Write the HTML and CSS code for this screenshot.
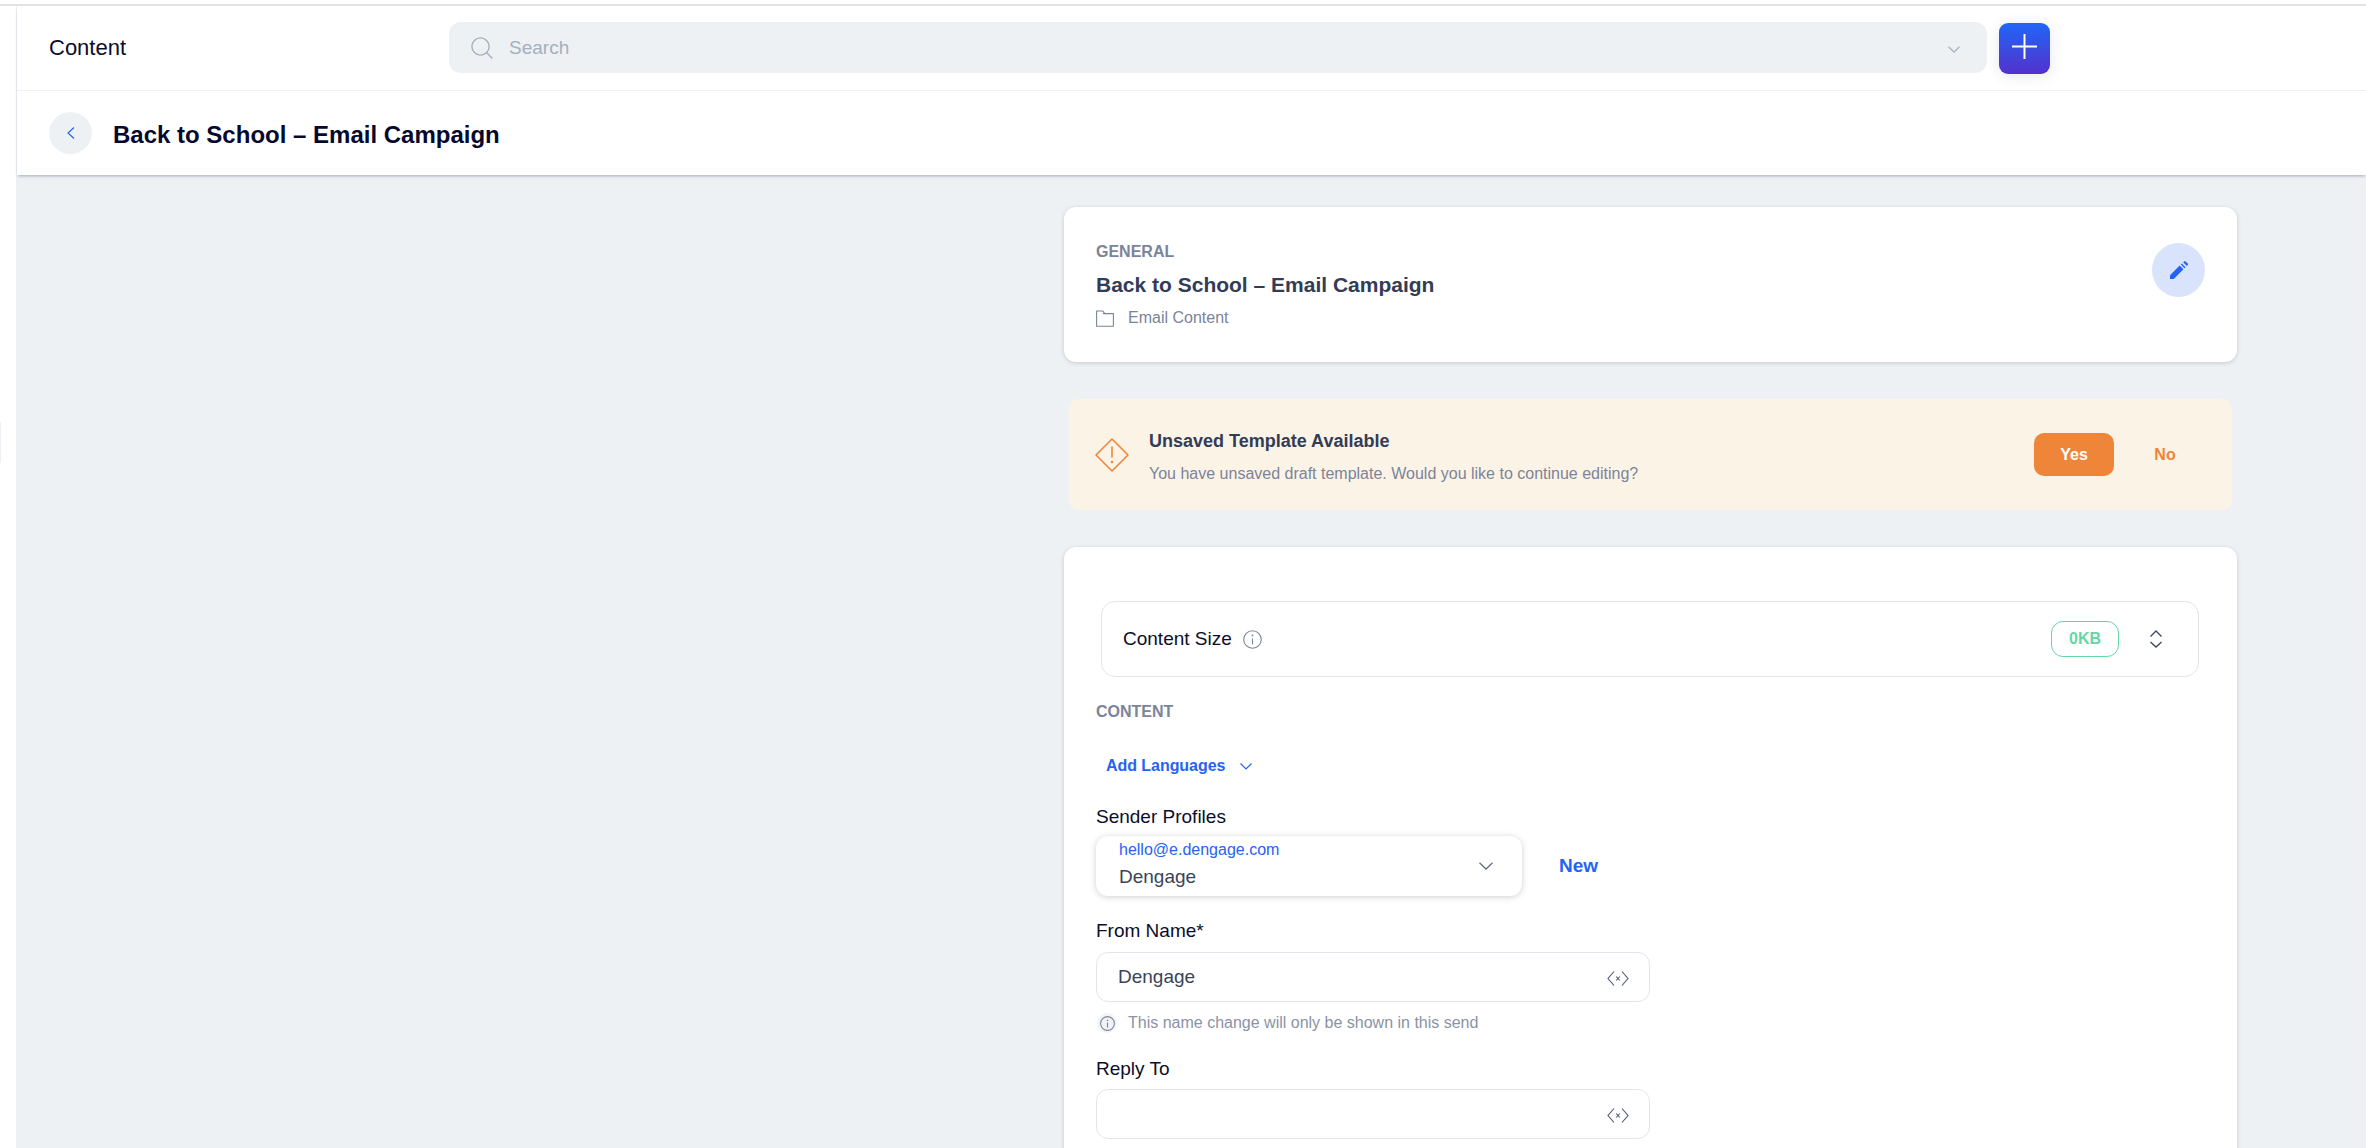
FILE: index.html
```html
<!DOCTYPE html>
<html lang="en">
<head>
    <meta charset="UTF-8">
    <title>Content</title>
    <link rel="stylesheet" href="styles.css">
</head>
<body>
    <div class="top-line"></div>
    <div class="shell">
        <div class="sidebar"><div class="sidebar-handle"></div></div>
        <div class="page">
            <div class="header">
                <div class="header-top">
                    <div class="section-name">Content</div>
                    <div class="search">
                        <svg class="search-icon" viewBox="0 0 22 22" fill="none" stroke="#a4afbd" stroke-width="1.4"><circle cx="9.5" cy="9.5" r="8.6"/><path d="M15.8 15.8l5.6 5.6"/></svg>
                        <span class="search-text">Search</span>
                        <svg class="search-chevron" viewBox="0 0 12 7" fill="none" stroke="#a9b3c1" stroke-width="1.3"><path d="M.5.7L6 6l5.5-5.3"/></svg>
                    </div>
                    <button class="add-btn">
                        <svg viewBox="0 0 25 25" width="25" height="25" stroke="#fff" stroke-width="2"><path d="M12.5 0v25M0 12.5h25"/></svg>
                    </button>
                </div>
                <div class="header-bottom">
                    <button class="back-btn">
                        <svg viewBox="0 0 8 12" width="8" height="12" fill="none" stroke="#2563f5" stroke-width="1.2"><path d="M7 .5L1 6l6 5.5"/></svg>
                    </button>
                    <h1 class="page-title">Back to School – Email Campaign</h1>
                </div>
            </div>

            <div class="main">
                <div class="column">
                    <div class="card general-card">
                        <div class="general-info">
                            <div class="section-label">GENERAL</div>
                            <div class="general-name">Back to School – Email Campaign</div>
                            <div class="general-folder">
                                <svg viewBox="0 0 18 17" width="18" height="17" fill="none" stroke="#7b8499" stroke-width="1.1"><path d="M.6 16.2V1h6.2l2 2.6h8.6v12.6z"/><path d="M6.8 3.6h2"/></svg>
                                <span>Email Content</span>
                            </div>
                        </div>
                        <button class="edit-btn">
                            <svg viewBox="0 0 18 18" width="18" height="18" fill="#2563f5"><path d="M0 14.2V18h3.8L13.4 8.3 9.7 4.6z"/><path d="M10.8 3.5l3.7 3.7 1-1-3.7-3.7z"/><path d="M13.2 1.3l3.6 3.6.9-.9a1 1 0 0 0 0-1.4L15.5.4a1 1 0 0 0-1.4 0z"/></svg>
                        </button>
                    </div>

                    <div class="alert">
                        <svg class="alert-icon" viewBox="0 0 34 34" fill="none" stroke="#ef8539" stroke-width="1.6"><path d="M17 1l16 16-16 16L1 17z" stroke-linejoin="round"/><path d="M17 8.5v11"/><circle cx="17" cy="24" r="1.3" fill="#ef8539" stroke="none"/></svg>
                        <div class="alert-text">
                            <div class="alert-title">Unsaved Template Available</div>
                            <div class="alert-sub">You have unsaved draft template. Would you like to continue editing?</div>
                        </div>
                        <button class="yes-btn">Yes</button>
                        <button class="no-btn">No</button>
                    </div>

                    <div class="card content-card">
                        <div class="size-box">
                            <span class="size-label">Content Size</span>
                            <svg class="info-icon" viewBox="0 0 19 19" fill="none" stroke="#7b8499" stroke-width="1.1"><circle cx="9.5" cy="9.5" r="8.8"/><path d="M9.5 8.4v6"/><circle cx="9.5" cy="5.4" r=".9" fill="#7b8499" stroke="none"/></svg>
                            <span class="size-badge">0KB</span>
                            <svg class="size-toggle" viewBox="0 0 12 18" width="12" height="18" fill="none" stroke="#3f4a63" stroke-width="1.4"><path d="M.5 6.5L6 1l5.5 5.5M.5 12L6 17l5.5-5"/></svg>
                        </div>

                        <div class="section-label content-label">CONTENT</div>

                        <div class="add-lang">
                            <span>Add Languages</span>
                            <svg viewBox="0 0 12 7" width="12" height="7" fill="none" stroke="#2563f5" stroke-width="1.2"><path d="M.5.5L6 6l5.5-5.5"/></svg>
                        </div>

                        <div class="field-label sender-label">Sender Profiles</div>
                        <div class="sender-row">
                            <div class="sender-select">
                                <div>
                                    <div class="sender-mail">hello@e.dengage.com</div>
                                    <div class="sender-name">Dengage</div>
                                </div>
                                <svg viewBox="0 0 14 8" width="14" height="8" fill="none" stroke="#666e7c" stroke-width="1.3"><path d="M.5.7L7 7l6.5-6.3"/></svg>
                            </div>
                            <span class="new-link">New</span>
                        </div>

                        <div class="field-label from-label">From Name*</div>
                        <div class="text-field">
                            <span>Dengage</span>
                            <svg class="var-icon" viewBox="0 0 22 15" fill="none" stroke="#4a5570" stroke-width="1.1"><path d="M7 .5L1 7.5l6 7M15 .5l6 7-6 7"/><path d="M9.2 5.5l3.6 4M12.8 5.5l-3.6 4"/></svg>
                        </div>
                        <div class="field-hint">
                            <span class="hint-icon">
                                <svg viewBox="0 0 15 15" width="15" height="15" fill="none" stroke="#7b8499" stroke-width="1.1"><circle cx="7.5" cy="7.5" r="6.9"/><path d="M7.5 6.5v5"/><circle cx="7.5" cy="4.2" r=".8" fill="#7b8499" stroke="none"/></svg>
                            </span>
                            <span>This name change will only be shown in this send</span>
                        </div>

                        <div class="field-label reply-label">Reply To</div>
                        <div class="text-field reply-field">
                            <svg class="var-icon" viewBox="0 0 22 15" fill="none" stroke="#4a5570" stroke-width="1.1"><path d="M7 .5L1 7.5l6 7M15 .5l6 7-6 7"/><path d="M9.2 5.5l3.6 4M12.8 5.5l-3.6 4"/></svg>
                        </div>
                    </div>
                </div>
            </div>
        </div>
    </div>
</body>
</html>
```

FILE: styles.css
```css
* {
    box-sizing: border-box;
}

html, body {
    margin: 0;
    height: 100%;
    overflow: hidden;
}

body {
    font-family: "Liberation Sans", Arial, sans-serif;
    background: #fff;
    color: #0b0d2a;
}

button {
    border: none;
    padding: 0;
    font-family: inherit;
    cursor: pointer;
}

.top-line {
    height: 6px;
    border-bottom: 2px solid #e2e3e5;
}

.shell {
    display: flex;
    height: 1142px;
}

.sidebar {
    width: 17px;
    flex-shrink: 0;
    border-right: 1px solid #eef1f4;
    padding-top: 416px;
}

.sidebar-handle {
    width: 1px;
    height: 41px;
    background: #edf1f6;
}

.page {
    flex: 1;
    display: flex;
    flex-direction: column;
    min-width: 0;
}

/* header */
.header {
    background: #fff;
    box-shadow: 0 2px 3px -1px rgba(30,40,60,0.35);
    position: relative;
}

.header-top {
    height: 85px;
    border-bottom: 1px solid #f0f1f3;
    display: flex;
    align-items: center;
    padding-left: 32px;
}

.section-name {
    width: 400px;
    font-size: 22px;
}

.search {
    width: 1538px;
    height: 51px;
    margin-top: -1px;
    background: #eef1f4;
    border-radius: 12px;
    display: flex;
    align-items: center;
    padding: 0 27px 0 22px;
}

.search-icon {
    width: 22px;
    height: 22px;
}

.search-text {
    margin-left: 16px;
    font-size: 19px;
    color: #a4afbd;
}

.search-chevron {
    width: 12px;
    height: 7px;
    margin-left: auto;
    margin-top: 3px;
}

.add-btn {
    width: 51px;
    height: 51px;
    margin-left: 12px;
    margin-top: 1px;
    border-radius: 9px;
    background: linear-gradient(#2166f6, #5331cd);
    box-shadow: 0 2px 14px rgba(40,60,120,0.12);
    display: flex;
    align-items: center;
    justify-content: center;
    padding-bottom: 5px;
}

.header-bottom {
    height: 84px;
    display: flex;
    align-items: center;
    padding-left: 32px;
}

.back-btn {
    width: 43px;
    height: 42px;
    border-radius: 50%;
    background: #eef1f4;
    display: flex;
    align-items: center;
    justify-content: center;
}

.page-title {
    margin: 3px 0 0 21px;
    font-size: 24px;
    font-weight: bold;
    color: #07082e;
}

/* main column */
.main {
    flex: 1;
    background: #eef1f4;
    padding: 32px 0 0 1047px;
    overflow: hidden;
}

.column {
    width: 1173px;
}

.card {
    background: #fff;
    border-radius: 12px;
    box-shadow: 0 1px 4px rgba(30,40,60,0.2);
}

.section-label {
    font-size: 16px;
    line-height: 20px;
    font-weight: bold;
    color: #7b8499;
}

.general-card {
    height: 155px;
    display: flex;
    justify-content: space-between;
    align-items: flex-start;
    padding: 35px 32px 0;
}

.general-name {
    margin-top: 10px;
    font-size: 21px;
    line-height: 26px;
    font-weight: bold;
    color: #323c57;
}

.general-folder {
    margin-top: 10px;
    display: flex;
    align-items: center;
    gap: 14px;
    font-size: 16px;
    line-height: 20px;
    color: #7b8499;
}

.edit-btn {
    width: 53px;
    height: 54px;
    margin-top: 1px;
    border-radius: 50%;
    background: #d9e3fb;
    display: flex;
    align-items: center;
    justify-content: center;
}

/* alert */
.alert {
    height: 111px;
    margin: 37px 5px;
    padding: 0 27px 0 26px;
    background: #fcf3e7;
    border-radius: 10px;
    display: flex;
    align-items: center;
}

.alert-icon {
    width: 34px;
    height: 34px;
    flex-shrink: 0;
}

.alert-text {
    margin-left: 20px;
    padding-top: 5px;
    flex: 1;
}

.alert-title {
    font-size: 18px;
    line-height: 24px;
    font-weight: bold;
    color: #323c57;
}

.alert-sub {
    margin-top: 10px;
    font-size: 16px;
    line-height: 22px;
    color: #7b8499;
}

.yes-btn {
    width: 80px;
    height: 43px;
    padding-top: 1px;
    border-radius: 10px;
    background: #ef8539;
    color: #fff;
    font-size: 16px;
    font-weight: bold;
}

.no-btn {
    width: 80px;
    height: 43px;
    padding-top: 1px;
    margin-left: 11px;
    background: none;
    color: #ef8539;
    font-size: 16px;
    font-weight: bold;
}

/* content card */
.content-card {
    padding: 54px 32px 40px;
}

.size-box {
    height: 76px;
    margin: 0 6px 0 5px;
    padding: 0 30px 0 21px;
    border: 1px solid #e1e6ed;
    border-radius: 14px;
    display: flex;
    align-items: center;
}

.size-label {
    font-size: 19px;
}

.info-icon {
    width: 19px;
    height: 19px;
    margin-left: 11px;
}

.size-badge {
    width: 68px;
    height: 36px;
    margin-left: auto;
    border: 1px solid #64d6a8;
    border-radius: 12px;
    color: #64d6a8;
    font-size: 16px;
    font-weight: bold;
    display: flex;
    align-items: center;
    justify-content: center;
}

.size-toggle {
    margin-left: 31px;
    margin-right: 6px;
}

.content-label {
    margin-top: 25px;
}

.add-lang {
    margin: 34px 0 0 10px;
    height: 20px;
    display: flex;
    align-items: center;
    gap: 15px;
    font-size: 16px;
    font-weight: bold;
    letter-spacing: -0.05px;
    color: #2563f5;
}

.field-label {
    font-size: 19px;
    line-height: 22px;
}

.sender-label {
    margin-top: 30px;
}

.sender-row {
    margin-top: 8px;
    display: flex;
    align-items: center;
}

.sender-select {
    width: 426px;
    height: 60px;
    padding: 0 29px 0 23px;
    border-radius: 12px;
    box-shadow: 0 1px 6px rgba(30,40,60,0.22);
    display: flex;
    align-items: center;
    justify-content: space-between;
}

.sender-mail {
    font-size: 16px;
    line-height: 20px;
    color: #2563f5;
    margin-top: -4px;
}

.sender-name {
    font-size: 19px;
    line-height: 24px;
    margin-top: 5px;
    color: #3a4459;
}

.new-link {
    margin-left: 37px;
    font-size: 19px;
    font-weight: bold;
    color: #2563f5;
}

.from-label {
    margin-top: 24px;
}

.text-field {
    width: 554px;
    height: 50px;
    margin-top: 10px;
    padding: 0 20px 0 21px;
    border: 1px solid #e1e6ed;
    border-radius: 12px;
    display: flex;
    align-items: center;
    justify-content: space-between;
    font-size: 19px;
    color: #3a4459;
}

.var-icon {
    width: 22px;
    height: 15px;
    margin-left: auto;
    margin-top: 3px;
}

.field-hint {
    margin-top: 11px;
    height: 20px;
    display: flex;
    align-items: center;
    gap: 11px;
    font-size: 16px;
    color: #8a93a6;
}

.hint-icon {
    width: 20px;
    height: 20px;
    margin-left: 1px;
    border-radius: 50%;
    background: #f1f3f6;
    display: flex;
    align-items: center;
    justify-content: center;
}

.reply-label {
    margin-top: 25px;
}

.reply-field {
    margin-top: 9px;
}
```
